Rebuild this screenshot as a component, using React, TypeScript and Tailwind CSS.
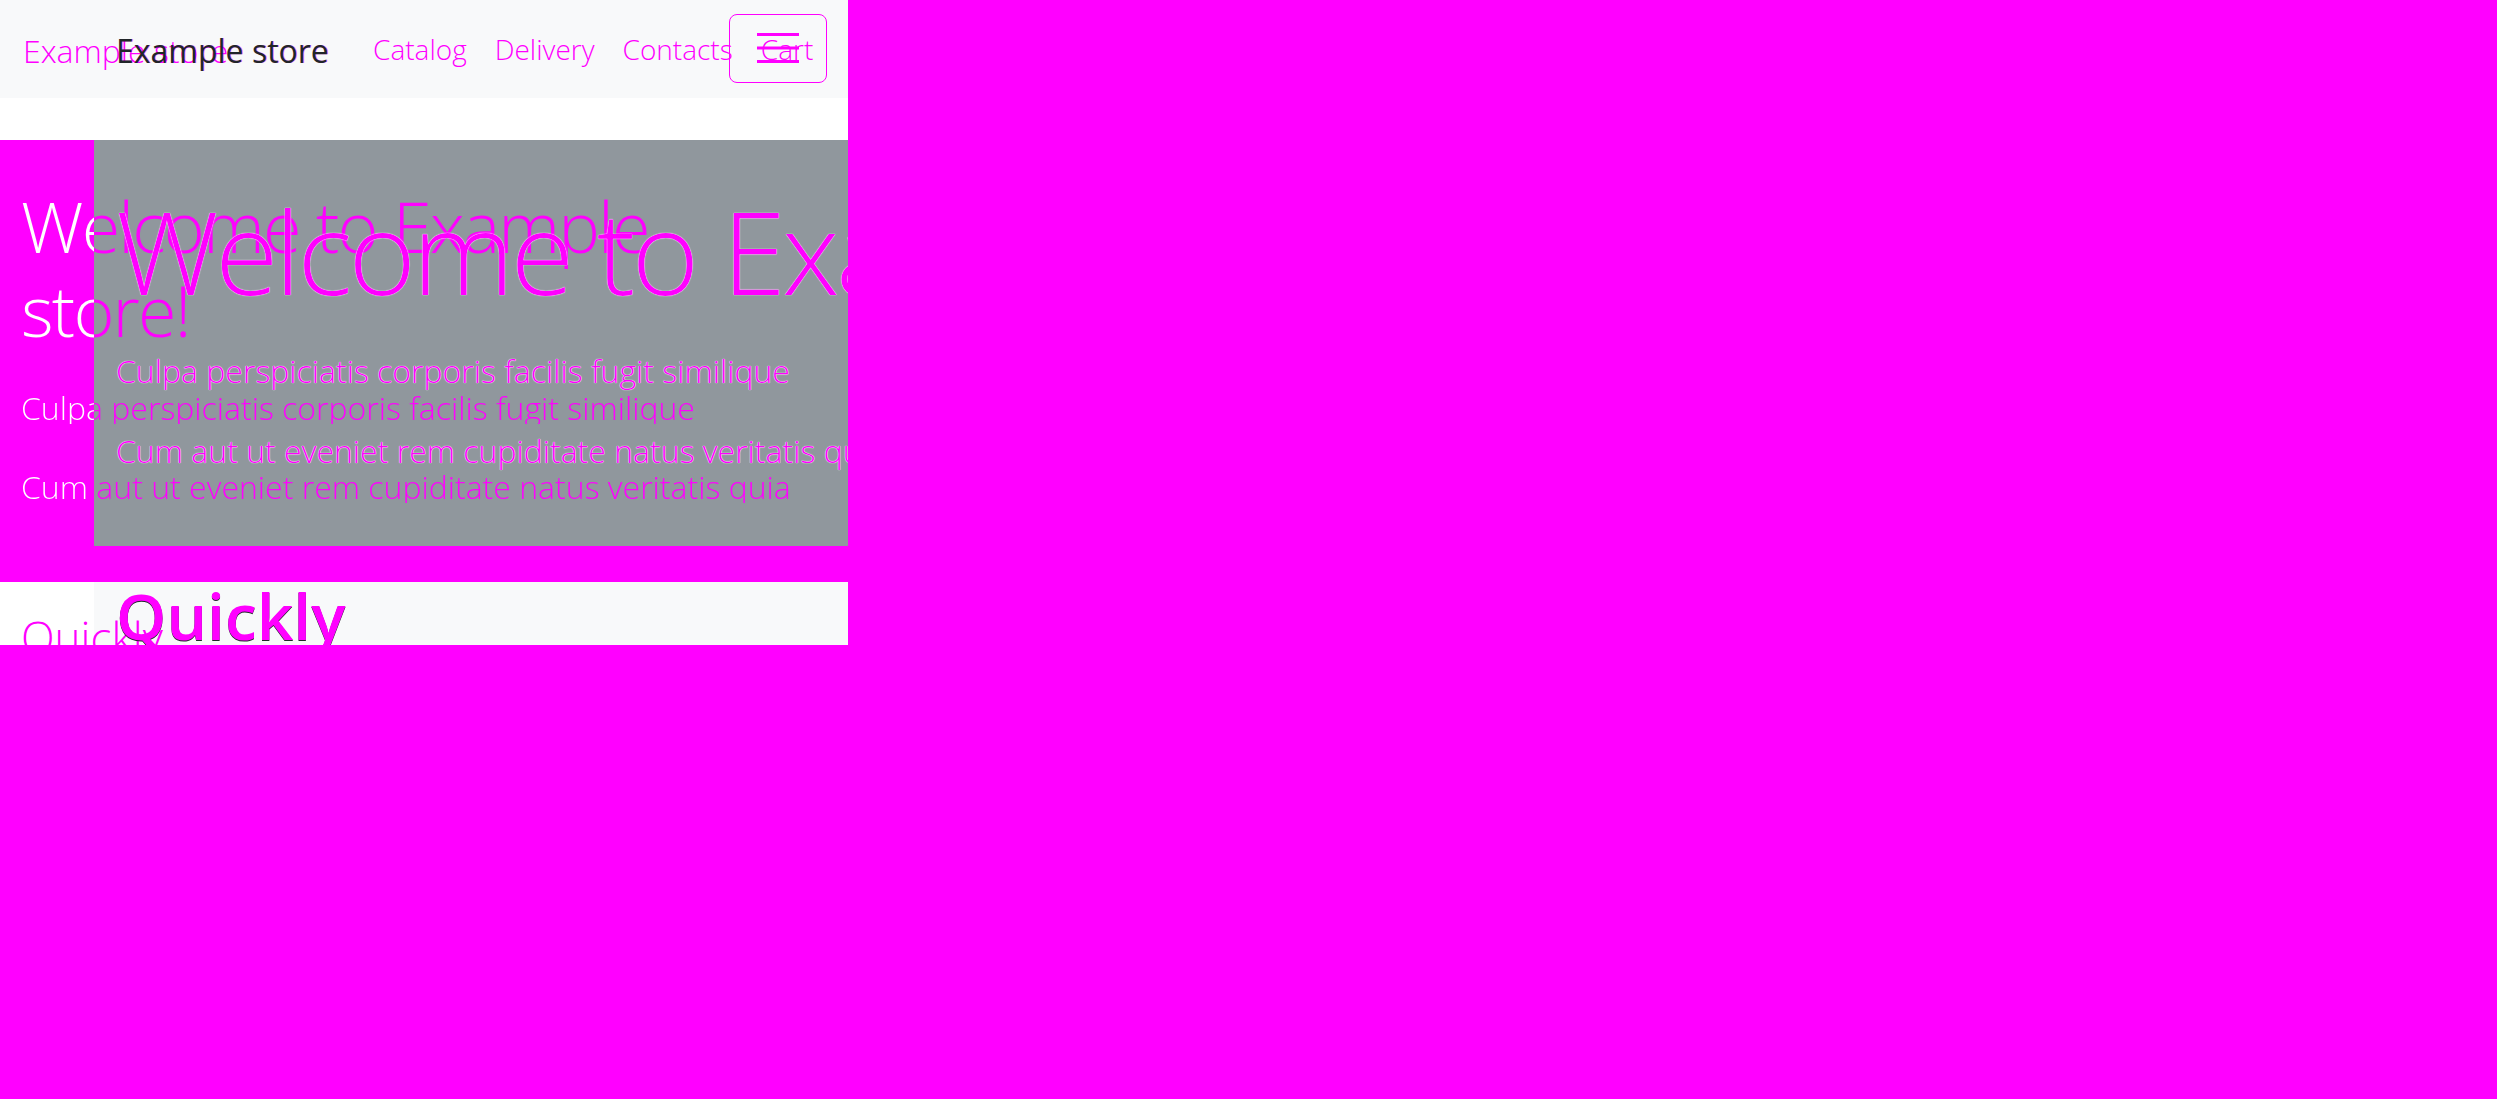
import React from "react";

const links = ["Catalog", "Delivery", "Contacts", "Cart"];

export default function App() {
  return (
    <div className="min-h-screen bg-[#ff00ff] font-['Open_Sans','Noto_Sans',sans-serif]">
      <div className="grid w-[848px] h-[645px] overflow-hidden">
        {/* backgrounds */}
        <div className="col-start-1 row-start-1 flex flex-col">
          <div className="h-[98px] bg-[#f8f9fa]" />
          <div className="h-[42px] bg-white" />
          <div className="h-[406px] flex">
            <div className="w-[94px] bg-[#ff00ff]" />
            <div className="flex-1 bg-[#90979d]" />
          </div>
          <div className="h-[36px]" />
          <div className="h-[63px] flex">
            <div className="w-[94px] bg-white" />
            <div className="flex-1 bg-[#f8f9fa]" />
          </div>
        </div>

        {/* first layer, narrow */}
        <div className="col-start-1 row-start-1 flex flex-col pl-[21px] whitespace-nowrap">
          <div className="h-[98px] pt-[35px] pl-[2px]">
            <span className="block text-[32px] leading-none font-light text-[#ff00ff]">Example store</span>
          </div>
          <h1 className="mt-[86px] text-[70px] leading-[1.2] font-light tracking-[-0.026em] bg-[linear-gradient(to_right,#fff_73px,#ff00ff_73px)] bg-clip-text text-transparent w-fit">
            Welcome to Example
            <br />
            store!
          </h1>
          <p className="mt-[40px] text-[32px] leading-none font-light bg-[linear-gradient(to_right,#fff_73px,#ff00ff_73px)] bg-clip-text text-transparent w-fit">
            Culpa perspiciatis corporis facilis fugit similique
          </p>
          <p className="mt-[47px] text-[32px] leading-none font-light bg-[linear-gradient(to_right,#fff_73px,#ff00ff_73px)] bg-clip-text text-transparent w-fit">
            Cum aut ut eveniet rem cupiditate natus veritatis quia
          </p>
          <h2 className="mt-[112px] text-[44px] leading-none font-light text-[#ff00ff]">Quickly</h2>
        </div>

        {/* second layer, wide */}
        <div className="col-start-1 row-start-1 flex flex-col pl-[116px] whitespace-nowrap">
          <nav className="relative h-[98px] flex items-start">
            <span className="w-[257px] pt-[35px] text-[32px] leading-none text-[#212529] [text-shadow:1px_0_0_rgba(255,0,255,0.5)]">
              Example store
            </span>
            <div className="flex gap-[28px] pt-[35px]">
              {links.map((l) => (
                <a key={l} className="text-[28px] leading-none font-light text-[#ff00ff]">
                  {l}
                </a>
              ))}
            </div>
            <button className="absolute left-[613px] top-[14px] w-[98px] h-[69px] border border-[#ff00ff] rounded-[8px] flex items-center justify-center">
              <svg width="42" height="30" viewBox="0 0 42 30" className="mt-[-2px]">
                <path d="M0 1.5h42M0 15h42M0 28.5h42" stroke="#ff00ff" strokeWidth="3" />
              </svg>
            </button>
          </nav>
          <h1 className="mt-[95px] text-[115px] leading-none font-light tracking-[-0.03em] text-[#ff00ff] [text-shadow:0_0_1px_#fff,0_0_1px_#fff]">
            Welcome to Example store!
          </h1>
          <p className="mt-[47px] text-[32px] leading-none font-light text-[#ff00ff] [text-shadow:0_0_1px_#fff,0_0_1px_#fff]">
            Culpa perspiciatis corporis facilis fugit similique
          </p>
          <p className="mt-[48px] text-[32px] leading-none font-light text-[#ff00ff] [text-shadow:0_0_1px_#fff,0_0_1px_#fff]">
            Cum aut ut eveniet rem cupiditate natus veritatis quia
          </p>
          <h2 className="mt-[117px] text-[64px] leading-none font-semibold text-[#ff00ff] [text-shadow:0_1px_0_#212529]">
            Quickly
          </h2>
        </div>
      </div>
    </div>
  );
}
